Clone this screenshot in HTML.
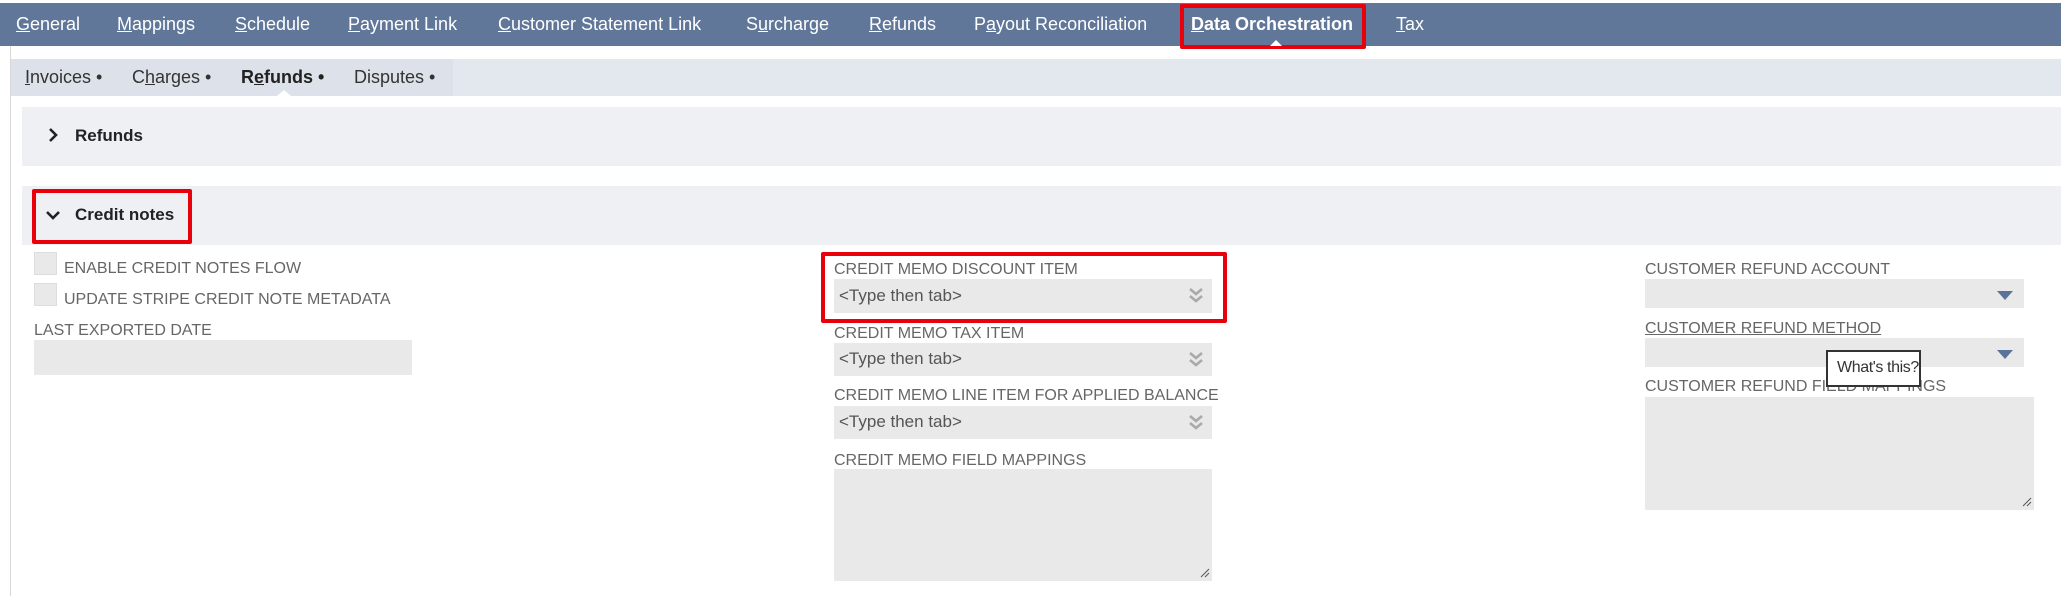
<!DOCTYPE html>
<html><head><meta charset="utf-8"><style>
*{margin:0;padding:0;box-sizing:border-box}
body{width:2061px;height:596px;position:relative;background:#fff;font-family:"Liberation Sans",Arial,sans-serif;overflow:hidden}
.a{position:absolute;white-space:nowrap}
.nav{left:0;top:3px;width:2061px;height:43px;background:#607799}
.ni{top:14px;font-size:18px;color:#fff}
.ni u{text-decoration:underline}
.lbl{font-size:16px;color:#666}
.inp{background:#e9e9e9}
.ph{font-size:17px;color:#555}
.red{border:4px solid #e8000b;border-radius:2px}
.sn{top:67px;font-size:18px;color:#333}
</style></head><body>
<div class="a nav"></div>
<div class="a ni" style="left:16px"><u>G</u>eneral</div>
<div class="a ni" style="left:117px"><u>M</u>appings</div>
<div class="a ni" style="left:235px"><u>S</u>chedule</div>
<div class="a ni" style="left:348px"><u>P</u>ayment Link</div>
<div class="a ni" style="left:498px"><u>C</u>ustomer Statement Link</div>
<div class="a ni" style="left:746px">S<u>u</u>rcharge</div>
<div class="a ni" style="left:869px"><u>R</u>efunds</div>
<div class="a ni" style="left:974px">P<u>a</u>yout Reconciliation</div>
<div class="a ni" style="left:1191px;font-weight:bold"><u>D</u>ata Orchestration</div>
<div class="a ni" style="left:1396px"><u>T</u>ax</div>
<div class="a red" style="left:1180px;top:4px;width:186px;height:45px"></div>
<div class="a" style="left:1270px;top:40px;width:0;height:0;border-left:6px solid transparent;border-right:6px solid transparent;border-bottom:6px solid #fff"></div>
<div class="a" style="left:10px;top:46px;width:1px;height:550px;background:#d8d8d8"></div>
<div class="a" style="left:11px;top:59px;width:2050px;height:37px;background:#e3e8ef"></div>
<div class="a" style="left:11px;top:59px;width:442px;height:37px;background:#dde2ea"></div>
<div class="a sn" style="left:25px"><u>I</u>nvoices •</div>
<div class="a sn" style="left:132px">C<u>h</u>arges •</div>
<div class="a sn" style="left:241px;font-weight:bold;color:#222">R<u>e</u>funds •</div>
<div class="a sn" style="left:354px">Disputes •</div>
<div class="a" style="left:277px;top:90px;width:0;height:0;border-left:7px solid transparent;border-right:7px solid transparent;border-bottom:6px solid #fff"></div>
<div class="a" style="left:22px;top:107px;width:2039px;height:59px;background:#eff0f4"></div>
<svg class="a" style="left:48px;top:128px" width="10" height="14"><path d="M2 1 L8 7 L2 13" stroke="#222" stroke-width="2.6" fill="none"/></svg>
<div class="a" style="left:75px;top:126px;font-size:17px;font-weight:bold;color:#222">Refunds</div>
<div class="a" style="left:22px;top:186px;width:2039px;height:59px;background:#eff0f4"></div>
<div class="a red" style="left:32px;top:189px;width:160px;height:55px"></div>
<svg class="a" style="left:46px;top:210px" width="14" height="10"><path d="M1 2 L7 8 L13 2" stroke="#222" stroke-width="2.6" fill="none"/></svg>
<div class="a" style="left:75px;top:205px;font-size:17px;font-weight:bold;color:#222">Credit notes</div>
<div class="a inp" style="left:34px;top:252px;width:23px;height:23px;border:1px solid #ddd"></div>
<div class="a lbl" style="left:64px;top:260px">ENABLE CREDIT NOTES FLOW</div>
<div class="a inp" style="left:34px;top:283px;width:23px;height:23px;border:1px solid #ddd"></div>
<div class="a lbl" style="left:64px;top:291px">UPDATE STRIPE CREDIT NOTE METADATA</div>
<div class="a lbl" style="left:34px;top:322px">LAST EXPORTED DATE</div>
<div class="a inp" style="left:34px;top:340px;width:378px;height:35px"></div>
<div class="a red" style="left:821px;top:252px;width:406px;height:71px"></div>
<div class="a lbl" style="left:834px;top:261px">CREDIT MEMO DISCOUNT ITEM</div>
<div class="a inp" style="left:834px;top:279px;width:378px;height:34px"></div>
<div class="a ph" style="left:839px;top:286px">&lt;Type then tab&gt;</div>
<div class="a lbl" style="left:834px;top:325px">CREDIT MEMO TAX ITEM</div>
<div class="a inp" style="left:834px;top:343px;width:378px;height:33px"></div>
<div class="a ph" style="left:839px;top:349px">&lt;Type then tab&gt;</div>
<div class="a lbl" style="left:834px;top:387px">CREDIT MEMO LINE ITEM FOR APPLIED BALANCE</div>
<div class="a inp" style="left:834px;top:406px;width:378px;height:33px"></div>
<div class="a ph" style="left:839px;top:412px">&lt;Type then tab&gt;</div>
<div class="a lbl" style="left:834px;top:452px">CREDIT MEMO FIELD MAPPINGS</div>
<div class="a inp" style="left:834px;top:469px;width:378px;height:112px"></div>
<svg class="a" style="left:1188px;top:286px" width="16" height="20"><path d="M2 3 L8 8 L14 3 M2 10 L8 15 L14 10" stroke="#aaa" stroke-width="2.6" fill="none"/></svg>
<svg class="a" style="left:1188px;top:350px" width="16" height="20"><path d="M2 3 L8 8 L14 3 M2 10 L8 15 L14 10" stroke="#aaa" stroke-width="2.6" fill="none"/></svg>
<svg class="a" style="left:1188px;top:413px" width="16" height="20"><path d="M2 3 L8 8 L14 3 M2 10 L8 15 L14 10" stroke="#aaa" stroke-width="2.6" fill="none"/></svg>
<svg class="a" style="left:1200px;top:568px" width="10" height="10"><path d="M1 9 L9 1 M5 9 L9 5" stroke="#555" stroke-width="1"/></svg>
<div class="a lbl" style="left:1645px;top:261px">CUSTOMER REFUND ACCOUNT</div>
<div class="a inp" style="left:1645px;top:279px;width:379px;height:29px"></div>
<svg class="a" style="left:1997px;top:291px" width="16" height="9"><path d="M0 0 L16 0 L8 9Z" fill="#5a7399"/></svg>
<div class="a lbl" style="left:1645px;top:320px;text-decoration:underline">CUSTOMER REFUND METHOD</div>
<div class="a inp" style="left:1645px;top:338px;width:379px;height:29px"></div>
<svg class="a" style="left:1997px;top:350px" width="16" height="9"><path d="M0 0 L16 0 L8 9Z" fill="#5a7399"/></svg>
<div class="a lbl" style="left:1645px;top:378px">CUSTOMER REFUND FIELD MAPPINGS</div>
<div class="a inp" style="left:1645px;top:397px;width:389px;height:113px"></div>
<svg class="a" style="left:2022px;top:497px" width="10" height="10"><path d="M1 9 L9 1 M5 9 L9 5" stroke="#555" stroke-width="1"/></svg>
<div class="a" style="left:1826px;top:350px;width:95px;height:37px;background:#fff;border:2px solid #333;font-size:16px;letter-spacing:-0.4px;color:#333;padding:7px 0 0 9px;overflow:hidden">What's this?</div>
</body></html>
